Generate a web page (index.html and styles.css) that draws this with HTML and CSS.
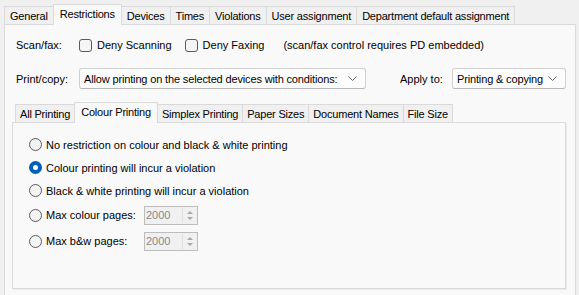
FILE: index.html
```html
<!DOCTYPE html>
<html lang="en">
<head>
    <meta charset="UTF-8">
    <title>Restrictions</title>
    <link rel="stylesheet" href="styles.css">
</head>
<body>
    <div class="tabs top-tabs">
        <div class="tab">General</div>
        <div class="tab active">Restrictions</div>
        <div class="tab">Devices</div>
        <div class="tab">Times</div>
        <div class="tab">Violations</div>
        <div class="tab">User assignment</div>
        <div class="tab">Department default assignment</div>
    </div>
    <div class="panel outer">
        <div class="row scan-row">
            <span class="label">Scan/fax:</span>
            <label class="check"><span class="box"></span>Deny Scanning</label>
            <label class="check"><span class="box"></span>Deny Faxing</label>
            <span class="note">(scan/fax control requires PD embedded)</span>
        </div>
        <div class="row print-row">
            <span class="label">Print/copy:</span>
            <div class="select wide">
                <span>Allow printing on the selected devices with conditions:</span>
                <svg class="chevron" width="9" height="5" viewBox="0 0 9 5"><path d="M0.5 0.5 L4.5 4.5 L8.5 0.5" fill="none" stroke="#5f5f5f" stroke-width="1"/></svg>
            </div>
            <span class="apply">Apply to:</span>
            <div class="select narrow">
                <span>Printing &amp; copying</span>
                <svg class="chevron" width="9" height="5" viewBox="0 0 9 5"><path d="M0.5 0.5 L4.5 4.5 L8.5 0.5" fill="none" stroke="#5f5f5f" stroke-width="1"/></svg>
            </div>
        </div>
        <div class="tabs inner-tabs">
            <div class="tab">All Printing</div>
            <div class="tab active">Colour Printing</div>
            <div class="tab">Simplex Printing</div>
            <div class="tab">Paper Sizes</div>
            <div class="tab">Document Names</div>
            <div class="tab">File Size</div>
        </div>
        <div class="panel inner">
            <label class="option"><span class="radio"></span>No restriction on colour and black &amp; white printing</label>
            <label class="option"><span class="radio checked"></span>Colour printing will incur a violation</label>
            <label class="option"><span class="radio"></span>Black &amp; white printing will incur a violation</label>
            <div class="option spin-row">
                <span class="radio"></span>
                <span class="spin-label">Max colour pages:</span>
                <div class="spin"><span>2000</span><span class="arrows"><i class="up"></i><i class="down"></i></span></div>
            </div>
            <div class="option spin-row">
                <span class="radio"></span>
                <span class="spin-label">Max b&amp;w pages:</span>
                <div class="spin"><span>2000</span><span class="arrows"><i class="up"></i><i class="down"></i></span></div>
            </div>
        </div>
    </div>
</body>
</html>
```

FILE: styles.css
```css
/* General Styles */
body {
    margin: 0;
    height: 295px;
    overflow: hidden;
    background-color: #f0f0f0;
    font-family: 'Liberation Sans', Arial, sans-serif;
    font-size: 11px;
    color: #000;
    white-space: nowrap;
}

/* Tabs */
.tabs {
    display: flex;
    align-items: flex-end;
    height: 24px;
    padding-left: 4px;
}
.tab {
    height: 17px;
    line-height: 18px;
    padding: 0 4px;
    letter-spacing: -0.2px;
    border: 1px solid #dadada;
    border-bottom: none;
    border-left: none;
    background: #f0f0f0;
}
.top-tabs .tab {
    padding: 0 5px;
}
.tab:first-child {
    border-left: 1px solid #dadada;
}
.tab.active {
    height: 20px;
    line-height: 18px;
    padding: 0 6px;
    margin-bottom: -1px;
    background: #f9f9f9;
    border-left: 1px solid #dadada;
    position: relative;
    z-index: 1;
}
.top-tabs .tab.active {
    padding: 0 6px;
}
.tab:has(+ .tab.active) {
    border-right: none;
}

/* Panels */
.panel {
    background: #f9f9f9;
    border: 1px solid #dadada;
    box-shadow: 1px 1px 0 #ececec;
}
.panel.outer {
    margin: 0 3px 0 4px;
    height: 260px;
    padding: 11px 9px 0 7px;
}
.row {
    display: flex;
    align-items: center;
    padding-left: 4px;
}
.label {
    width: 63px;
}

/* Scan/fax row */
.scan-row {
    height: 18px;
}
.check {
    display: flex;
    align-items: center;
    gap: 5px;
    margin-right: 13px;
}
.box {
    width: 11px;
    height: 11px;
    border: 1px solid #5b5b5b;
    border-radius: 3px;
    background: #f5f5f5;
}
.note {
    margin-left: 6px;
}

/* Print/copy row */
.print-row {
    margin-top: 14px;
}
.select {
    display: flex;
    align-items: center;
    justify-content: space-between;
    height: 19px;
    padding: 0 8px 0 4px;
    border: 1px solid #d0d0d0;
    border-bottom-color: #b8b8b8;
    border-radius: 3px;
    background: #fdfdfd;
}
.select span {
    overflow: hidden;
    letter-spacing: -0.15px;
}
.chevron {
    flex-shrink: 0;
}
.select.wide {
    width: 273px;
}
.select.narrow {
    width: 100px;
}
.apply {
    margin-left: 34px;
    width: 52px;
}

/* Inner tabs */
.inner-tabs {
    margin-top: 13px;
    height: 20px;
    padding-left: 3px;
}
.panel.inner {
    height: 167px;
    padding: 10px 0 0 16px;
    box-sizing: border-box;
}
.option {
    display: flex;
    align-items: center;
    height: 23px;
}
.radio {
    width: 11px;
    height: 11px;
    margin-right: 4px;
    border: 1px solid #5b5b5b;
    border-radius: 50%;
    background: #f3f3f3;
    flex-shrink: 0;
}
.radio.checked {
    width: 5px;
    height: 5px;
    border: 4px solid #005fb8;
    background: #fff;
}
.spin-row {
    height: 26px;
}
.spin-label {
    width: 98px;
}
.spin {
    display: flex;
    align-items: center;
    justify-content: space-between;
    width: 51px;
    height: 17px;
    padding-left: 1px;
    border: 1px solid #bdbdbd;
    background: #f0f0f0;
    color: #8a8a8a;
}
.arrows {
    display: flex;
    flex-direction: column;
    gap: 3px;
    width: 13px;
    height: 15px;
    margin-right: 1px;
    align-items: center;
    justify-content: center;
    border-left: 1px solid #e0e0e0;
}
.arrows i {
    width: 0;
    height: 0;
    border-left: 3px solid transparent;
    border-right: 3px solid transparent;
}
.arrows .up {
    border-bottom: 3px solid #a8a8a8;
}
.arrows .down {
    border-top: 3px solid #a8a8a8;
}
```
